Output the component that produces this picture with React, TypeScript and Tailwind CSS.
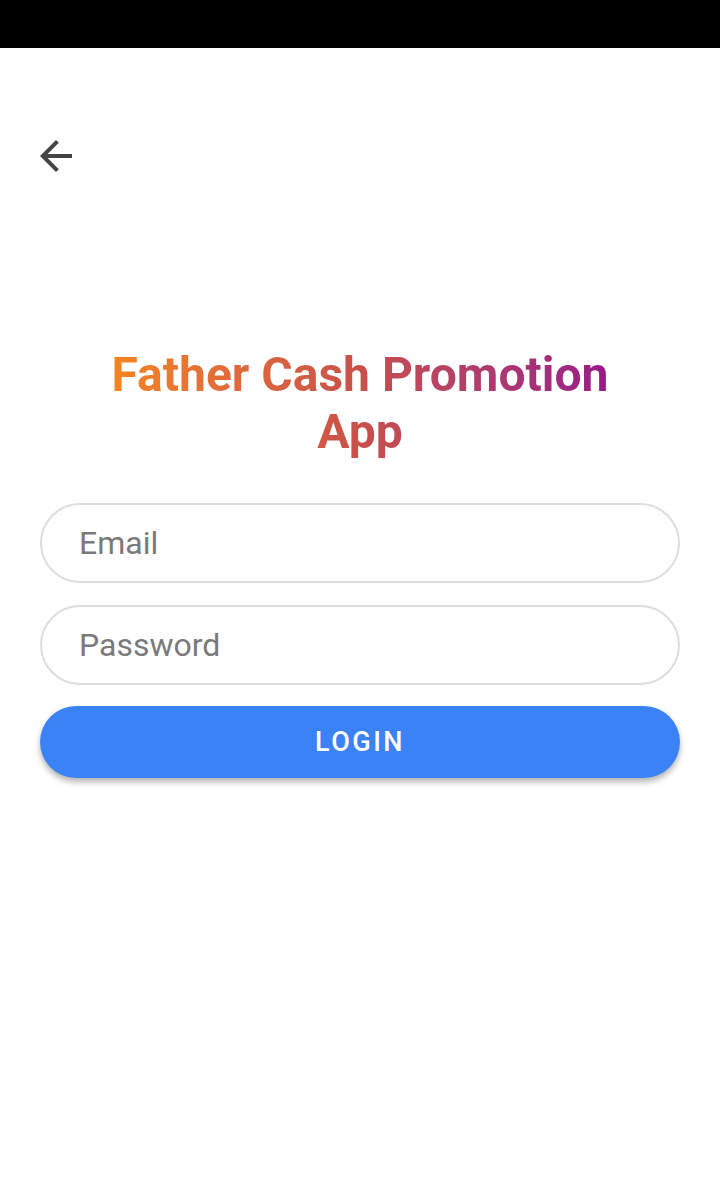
export default function App() {
  return (
    <div className="min-h-[1187px] bg-white font-['Roboto',sans-serif]">
      <div className="h-12 bg-black" />
      <div className="px-8 pt-[84px]">
        <button className="flex h-12 w-12 items-center justify-center text-[#444]">
          <svg viewBox="0 0 24 24" className="h-12 w-12" fill="currentColor">
            <path d="M20 11H7.83l5.59-5.59L12 4l-8 8 8 8 1.41-1.41L7.83 13H20v-2z" />
          </svg>
        </button>
      </div>

      <div className="px-10 pt-[166px]">
        <div className="flex justify-center">
          <h1 className="bg-gradient-to-r from-[#f5841c] via-[#c8504a] to-[#981a88] bg-clip-text text-center text-[48px] font-bold leading-[57px] text-transparent">
            Father Cash Promotion
            <br />
            App
          </h1>
        </div>

        <div className="mt-[43px] flex flex-col gap-[22px]">
          <input
            placeholder="Email"
            className="h-20 w-full rounded-full border-2 border-[#dddddd] px-[37px] text-[32px] text-[#333] outline-none placeholder:text-[#7a7a7a]"
          />
          <input
            type="password"
            placeholder="Password"
            className="h-20 w-full rounded-full border-2 border-[#dddddd] px-[37px] text-[32px] text-[#333] outline-none placeholder:text-[#7a7a7a]"
          />
        </div>

        <button className="mt-[21px] h-[72px] w-full rounded-full bg-[#3b82f6] text-[27px] font-medium tracking-[2.5px] text-white shadow-[0_4px_6px_rgba(0,0,0,0.3)]">
          LOGIN
        </button>
      </div>
    </div>
  );
}
